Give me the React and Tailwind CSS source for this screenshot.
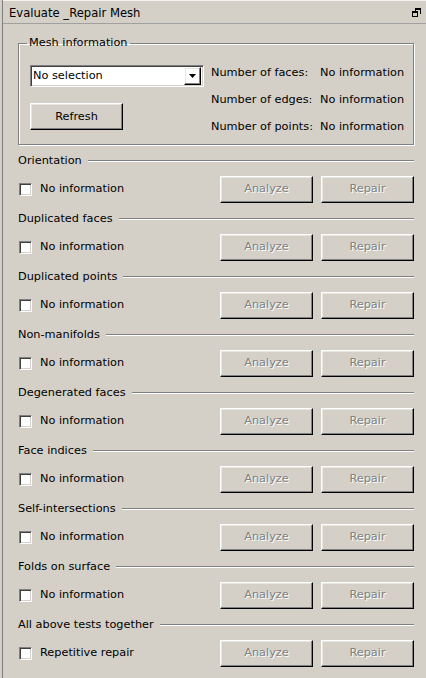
import React from 'react';

const raised = 'border border-t-white border-l-white border-r-black border-b-black shadow-[inset_-1px_-1px_0_#808080,inset_1px_1px_0_#e8e6e0]';
const sunken = 'border border-t-[#808080] border-l-[#808080] border-b-white border-r-white shadow-[inset_1px_1px_0_#404040,inset_-1px_-1px_0_#d4d0c8]';

const checks = [
    { title: 'Orientation', text: 'No information' },
    { title: 'Duplicated faces', text: 'No information' },
    { title: 'Duplicated points', text: 'No information' },
    { title: 'Non-manifolds', text: 'No information' },
    { title: 'Degenerated faces', text: 'No information' },
    { title: 'Face indices', text: 'No information' },
    { title: 'Self-intersections', text: 'No information' },
    { title: 'Folds on surface', text: 'No information' },
    { title: 'All above tests together', text: 'Repetitive repair' },
];

function Button({ children, disabled, className = '' }) {
    return (
        <button
            disabled={disabled}
            className={`${raised} h-[27px] bg-[#d4d0c8] flex items-center justify-center ${
                disabled ? 'text-[#808080] [text-shadow:1px_1px_0_#fff]' : 'text-black'
            } ${className}`}
        >
            {children}
        </button>
    );
}

function CheckBox() {
    return <div className={`${sunken} w-[13px] h-[13px] bg-white shrink-0`} />;
}

function RestoreIcon() {
    return (
        <svg width="9" height="9" viewBox="0 0 9 9" className="block">
            {/* back window */}
            <path d="M3 0h6v6h-1v-4h-4v1h-1z" fill="#000" />
            {/* front window */}
            <rect x="0" y="3" width="6" height="6" fill="#d4d0c8" />
            <path d="M0 3h6v6h-6zM1 5v3h4v-3z" fill="#000" fillRule="evenodd" />
        </svg>
    );
}

export default function App() {
    return (
        <div className="w-[426px] h-[678px] bg-[#d4d0c8] pl-[2px] font-['DejaVu_Sans',sans-serif] text-[11.3px] leading-[14px] text-black overflow-hidden">
            <div className="h-full border-l border-[#808080] flex flex-col">
                {/* Title bar */}
                <div className="h-[24px] shrink-0 border-t border-t-[#f4f3ef] border-b border-b-[#a0a0a0] flex items-center justify-between pl-[6px] pr-[5px]">
                    <span className="text-[11.6px] pt-[1px]">Evaluate _Repair Mesh</span>
                    <RestoreIcon />
                </div>

                <div className="pl-[15px] pr-[12px] flex flex-col">
                    {/* Mesh information group */}
                    <fieldset className="mt-[12px] border border-[#808080] shadow-[inset_1px_1px_0_#fff,1px_1px_0_#fff] p-0 pb-[4px]">
                        <legend className="ml-[8px] px-[2px] leading-[14px]">Mesh information</legend>
                        <div className="flex pt-[9px]">
                            <div className="ml-[11px] w-[174px] flex flex-col">
                                <div className={`${sunken} mt-[6px] h-[22px] bg-white flex items-center pl-[2px] pr-[2px]`}>
                                    <span className="flex-1">No selection</span>
                                    <div className={`${raised} w-[17px] h-[18px] flex items-center justify-center`}>
                                        <svg width="7" height="4" viewBox="0 0 7 4"><path d="M0 0h7l-3.5 4z" fill="#000" /></svg>
                                    </div>
                                </div>
                                <Button className="mt-[16px] w-[93px]">Refresh</Button>
                            </div>
                            <div className="ml-[7px] grid grid-cols-[109px_auto]">
                                <span className="h-[27px] flex items-center">Number of faces:</span>
                                <span className="h-[27px] flex items-center">No information</span>
                                <span className="h-[27px] flex items-center">Number of edges:</span>
                                <span className="h-[27px] flex items-center">No information</span>
                                <span className="h-[27px] flex items-center">Number of points:</span>
                                <span className="h-[27px] flex items-center">No information</span>
                            </div>
                        </div>
                    </fieldset>

                    {/* Checks */}
                    <div className="mt-[8px] flex flex-col gap-[8px]">
                        {checks.map((c) => (
                            <div key={c.title} className="flex flex-col">
                                <div className="h-[16px] flex items-center gap-[6px]">
                                    <span>{c.title}</span>
                                    <div className="flex-1 h-[2px] border-t border-[#808080] border-b border-b-white" />
                                </div>
                                <div className="mt-[6px] h-[28px] flex items-center">
                                    <div className="ml-[1px]"><CheckBox /></div>
                                    <span className="ml-[8px] flex-1">{c.text}</span>
                                    <Button disabled className="w-[93px]">Analyze</Button>
                                    <Button disabled className="ml-[8px] w-[93px]">Repair</Button>
                                </div>
                            </div>
                        ))}
                    </div>
                </div>
            </div>
        </div>
    );
}
